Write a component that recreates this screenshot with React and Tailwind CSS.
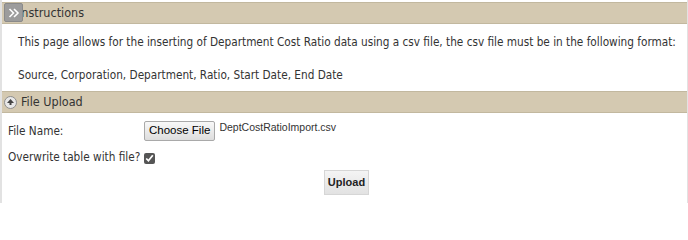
import { useState } from "react";

const font = { fontFamily: '"DejaVu Sans Condensed", "DejaVu Sans", Verdana, sans-serif' };
const arial = { fontFamily: '"Liberation Sans", Arial, sans-serif' };

const SectionHeader = ({ icon, title }) => {
  return (
    <div className="relative h-[22px] bg-[#d4c9b1] border-t border-b border-[#c2b89f] flex items-center">
      {icon}
      <span className="text-[12.5px] text-[#333]">{title}</span>
    </div>
  );
};

const ExpandIcon = () => (
  <div className="absolute left-[2px] top-[0px] w-[19px] h-[19px] rounded-[2px] bg-[#9c9c9c] border border-[#8a8a8a] flex items-center justify-center">
    <svg width="12" height="10" viewBox="0 0 12 10" fill="none" stroke="#fff" strokeWidth="1.6">
      <path d="M1.5 1 L5.5 5 L1.5 9" />
      <path d="M6 1 L10 5 L6 9" />
    </svg>
  </div>
);

const CollapseIcon = () => (
  <span className="ml-[2px] mr-[4px] w-[13px] h-[13px] rounded-full bg-[#e8e8e8] border border-[#8d8d8d] flex items-center justify-center">
    <svg width="7" height="6" viewBox="0 0 7 6">
      <path d="M3.5 0 L7 4 L4.5 4 L4.5 6 L2.5 6 L2.5 4 L0 4 Z" fill="#444" />
    </svg>
  </span>
);

export default function App() {
  const [overwrite, setOverwrite] = useState(true);

  return (
    <div className="w-[688px] h-[203px] bg-white border-l-2 border-r border-[#e2e2e2] pt-[2px] overflow-hidden" style={font}>
      <SectionHeader icon={<ExpandIcon />} title={<span className="pl-[16px]">Instructions</span>} />
      <div className="pl-[16px] pt-[11px] pb-[9px] text-[11.7px] text-[#333] leading-[14px] whitespace-nowrap">
        <p>
          This page allows for the inserting of Department Cost Ratio data using a csv file, the csv file must be in the following format:
        </p>
        <p className="mt-[19px]">Source, Corporation, Department, Ratio, Start Date, End Date</p>
      </div>
      <SectionHeader icon={<CollapseIcon />} title="File Upload" />
      <div className="pl-[6px] text-[11.7px] text-[#333]">
        <div className="flex items-center mt-[8px] h-[20px]">
          <span className="w-[136px] pt-[1px]">File Name:</span>
          <button
            type="button"
            className="h-[20px] px-[4px] border border-[#a9a9a9] rounded-[2px] bg-gradient-to-b from-[#f8f8f8] to-[#dddddd] text-[11.5px] text-black"
            style={arial}
          >
            Choose File
          </button>
          <span className="ml-[4px] self-start -mt-[1px] text-[10.5px] text-[#333]" style={arial}>
            DeptCostRatioImport.csv
          </span>
        </div>
        <div className="flex items-center mt-[9px] h-[16px]">
          <span>Overwrite table with file?</span>
          <input
            type="checkbox"
            checked={overwrite}
            onChange={(e) => setOverwrite(e.target.checked)}
            className="ml-[4px] w-[11px] h-[11px] accent-[#555]"
          />
        </div>
        <div className="flex justify-center mt-[4px] pr-[2px]">
          <button
            type="button"
            className="h-[25px] px-[3px] border border-[#d6d6d6] bg-gradient-to-b from-[#f4f4f4] to-[#e2e2e2] text-[11px] font-bold text-[#222]"
            style={arial}
          >
            Upload
          </button>
        </div>
      </div>
    </div>
  );
}
